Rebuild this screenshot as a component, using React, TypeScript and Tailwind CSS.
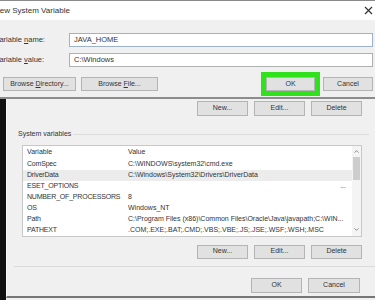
import { ChevronUp, ChevronDown } from "lucide-react";

const rows: [string, string][] = [
  ["ComSpec", "C:\\WINDOWS\\system32\\cmd.exe"],
  ["DriverData", "C:\\Windows\\System32\\Drivers\\DriverData"],
  ["ESET_OPTIONS", ""],
  ["NUMBER_OF_PROCESSORS", "8"],
  ["OS", "Windows_NT"],
  ["Path", "C:\\Program Files (x86)\\Common Files\\Oracle\\Java\\javapath;C:\\WIN..."],
  ["PATHEXT", ".COM;.EXE;.BAT;.CMD;.VBS;.VBE;.JS;.JSE;.WSF;.WSH;.MSC"],
];

function WinButton({ children, className = "" }: { children: React.ReactNode; className?: string }) {
  return (
    <div
      className={`flex items-center justify-center h-[14px] bg-[#e1e1e1] border border-[#b4b4b4] text-[7px] text-[#333] ${className}`}
    >
      <span className="whitespace-pre">{children}</span>
    </div>
  );
}

function NewVariableDialog() {
  return (
    <div className="border-t border-[#8a8a8a] bg-[#f0f0f0] border-b-2 border-b-[#8c8c8c]">
      <div className="h-[19px] bg-white flex items-center pr-[2px]">
        <span className="ml-[-6px] text-[8px] text-[#333]">New System Variable</span>
        <div className="flex-1" />
        <svg width="9" height="9" viewBox="0 0 9 9" className="shrink-0">
          <path d="M1 1 L8 8 M8 1 L1 8" stroke="#333" strokeWidth="1.2" />
        </svg>
      </div>
      <div className="pt-[13px] pb-[6px] pr-[2px] flex flex-col">
        <div className="flex items-center h-[14px]">
          <span className="ml-[-5px] w-[74px] text-[7.5px] text-[#333]">
            Variable <span className="underline">n</span>ame:
          </span>
          <div className="flex-1 h-[14px] bg-white border border-[#9fb3c8] flex items-center pl-[4px] text-[7.5px] text-[#333]">
            JAVA_HOME
          </div>
        </div>
        <div className="flex items-center h-[14px] mt-[6px]">
          <span className="ml-[-5px] w-[74px] text-[7.5px] text-[#333]">
            Variable <span className="underline">v</span>alue:
          </span>
          <div className="flex-1 h-[14px] bg-white border border-[#b0b0b0] flex items-center pl-[4px] text-[7.5px] text-[#333]">
            C:\Windows
          </div>
        </div>
        <div className="flex items-center mt-[10px] pl-[3px]">
          <WinButton className="w-[73px]">
            {"Browse "}<span className="underline">D</span>{"irectory..."}
          </WinButton>
          <WinButton className="w-[77px] ml-[5px]">
            {"Browse "}<span className="underline">F</span>{"ile..."}
          </WinButton>
          <WinButton className="w-[49px] ml-[108px] outline-[5px] outline-[#2fe21b]">OK</WinButton>
          <WinButton className="w-[50px] ml-[8px]">Cancel</WinButton>
        </div>
      </div>
    </div>
  );
}

function EnvironmentDialog() {
  return (
    <div className="flex flex-1">
      <div className="w-[6px] bg-[#111]" />
      <div className="flex-1 flex flex-col bg-[#f0f0f0] border-l border-[#fafafa] border-b-2 border-b-[#777] mb-[2px]">
        <div className="flex justify-end gap-[6px] pr-[13px] mt-[2px]">
          <WinButton className="w-[51px] h-[15px]">New...</WinButton>
          <WinButton className="w-[51px] h-[15px]">Edit...</WinButton>
          <WinButton className="w-[51px] h-[15px]">Delete</WinButton>
        </div>
        <div className="flex items-center mt-[13px] ml-[11px]">
          <span className="text-[7px] text-[#333] pr-[2px]">System variables</span>
          <div className="flex-1 h-px bg-[#dcdcdc] mr-[6px]" />
        </div>
        <div className="mt-[5px] ml-[15px] mr-[13px] h-[92px] bg-white border border-[#c8c8c8] flex overflow-hidden">
          <div className="flex-1 flex flex-col">
            <div className="h-[13px] shrink-0 flex items-center text-[7px] text-[#333]">
              <span className="w-[105px] pl-[4px]">Variable</span>
              <span>Value</span>
            </div>
            {rows.map(([name, value]) => (
              <div
                key={name}
                className={`h-[11px] shrink-0 flex items-center text-[7px] text-[#333] ${name === "DriverData" ? "bg-[#ececec]" : ""}`}
              >
                <span className="w-[105px] shrink-0 pl-[4px] whitespace-nowrap tracking-[-0.2px]">{name}</span>
                <span className="flex-1 whitespace-nowrap overflow-hidden">{value}</span>
                {name === "ESET_OPTIONS" && <span className="pr-[6px] text-[7px]">...</span>}
              </div>
            ))}
          </div>
          <div className="w-[9px] bg-[#f4f4f4] flex flex-col items-center">
            <ChevronUp className="w-[7px] h-[7px] mt-[2px] text-[#666]" strokeWidth={2.5} />
            <div className="w-[7px] h-[23px] bg-[#cdcdcd] mt-[2px]" />
            <div className="flex-1" />
            <ChevronDown className="w-[7px] h-[7px] mb-[3px] text-[#666]" strokeWidth={2.5} />
          </div>
        </div>
        <div className="flex justify-end gap-[6px] pr-[13px] mt-[8px]">
          <WinButton className="w-[51px]">New...</WinButton>
          <WinButton className="w-[51px]">Edit...</WinButton>
          <WinButton className="w-[51px]">Delete</WinButton>
        </div>
        <div className="h-px bg-[#dadada] mt-[7px] ml-[7px]" />
        <div className="flex justify-end gap-[6px] pr-[15px] mt-[11px]">
          <WinButton className="w-[51px] h-[15px]">OK</WinButton>
          <WinButton className="w-[52px] h-[15px]">Cancel</WinButton>
        </div>
      </div>
    </div>
  );
}

export default function App() {
  return (
    <div
      className="w-[375px] h-[300px] overflow-hidden flex flex-col bg-[#f0f0f0]"
      style={{ fontFamily: '"Liberation Sans", Arial, sans-serif' }}
    >
      <NewVariableDialog />
      <EnvironmentDialog />
    </div>
  );
}
